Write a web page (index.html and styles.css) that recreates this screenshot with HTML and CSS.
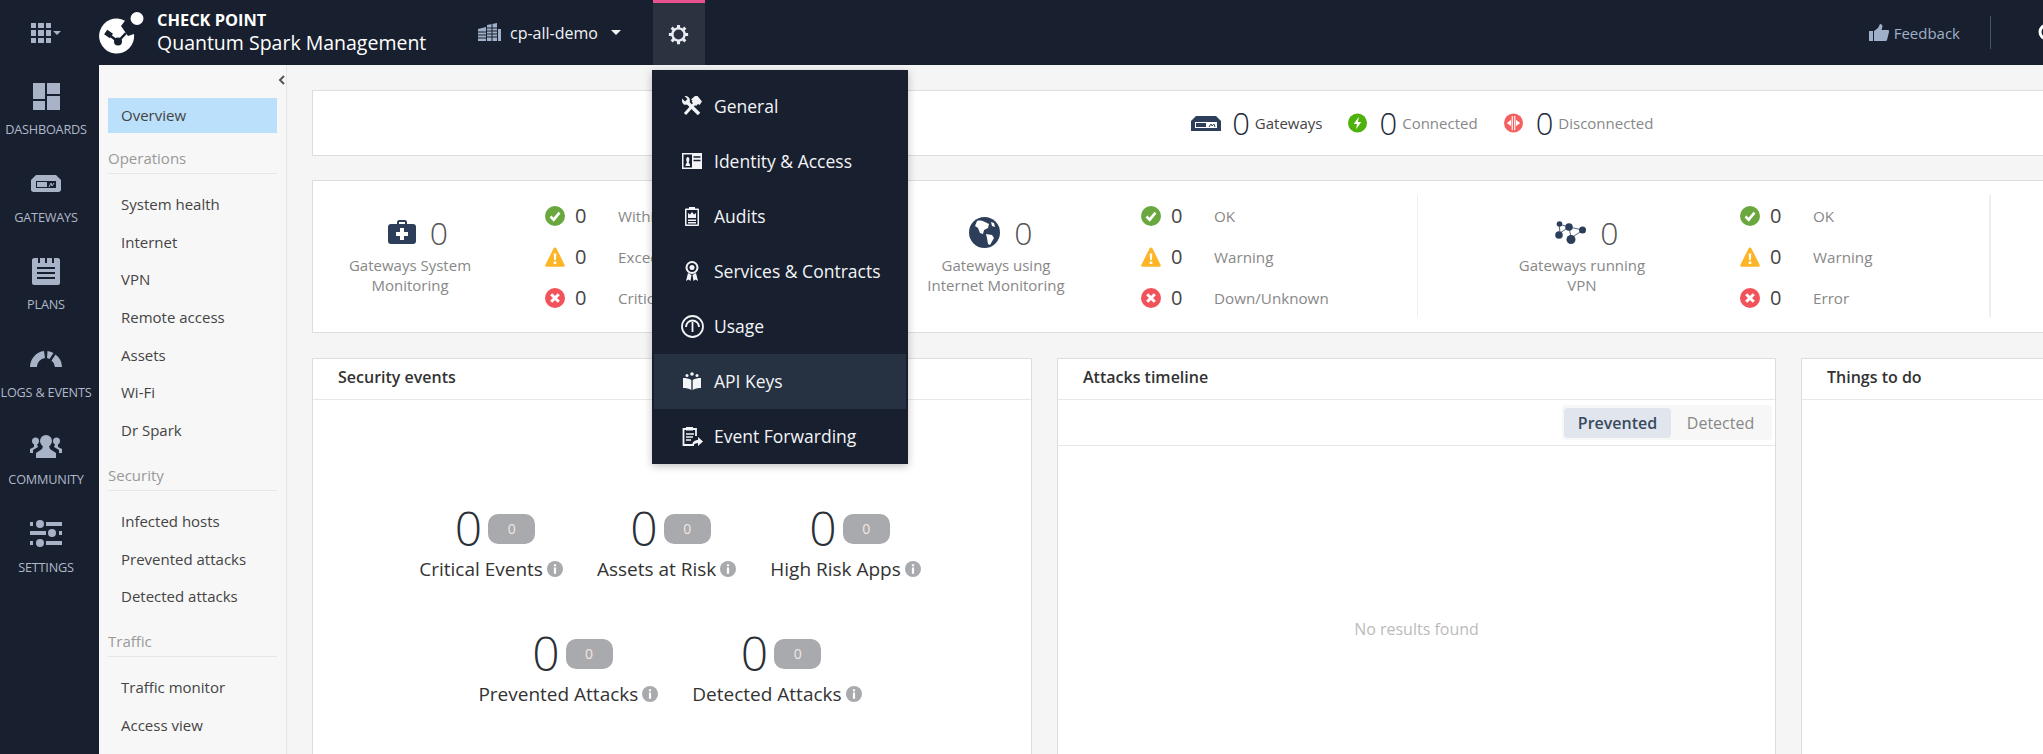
FILE: index.html
```html
<!DOCTYPE html>
<html lang="en">
<head>
    <meta charset="UTF-8">
    <title>Quantum Spark Management</title>
    <link rel="stylesheet" href="styles.css">
</head>
<body>
    <svg class="sprite" width="0" height="0">
        <symbol id="ok" viewBox="0 0 20 20"><circle cx="10" cy="10" r="10" fill="#6aa83f"/><path d="M5.5 10.5l3.2 3.2 5.8-7" fill="none" stroke="#fff" stroke-width="2.6"/></symbol>
        <symbol id="warn" viewBox="0 0 20 20"><path d="M10 .5c.7 0 1.2.4 1.5 1l8.2 16.5c.4.9-.1 1.7-1.1 1.7H1.400c-1 0-1.500-.8-1.100-1.700L8.500 1.500c.3-.6.8-1 1.500-1z" fill="#fdb528"/><path d="M8.700 6.500h2.600l-.4 6.500H9.100zM8.700 14.500h2.600V17H8.700z" fill="#fff"/></symbol>
        <symbol id="err" viewBox="0 0 20 20"><circle cx="10" cy="10" r="10" fill="#f2525a"/><path d="M6.200 6.200l7.600 7.600M13.800 6.200l-7.600 7.600" stroke="#fff" stroke-width="3"/></symbol>
        <symbol id="info" viewBox="0 0 16 16"><circle cx="8" cy="8" r="8" fill="#a9aaad"/><path d="M6.900 3.200h2.200v2H6.900zM6.900 6.500h2.200v6.300H6.900z" fill="#fff"/></symbol>
    </svg>

    <header class="topbar">
        <svg class="apps" width="31" height="20" viewBox="0 0 31 20" fill="#a8b3c7"><path d="M0 0h5v5H0zM7 0h6v5H7zM15 0h5v5h-5zM0 7h5v6H0zM7 7h6v6H7zM15 7h5v6h-5zM0 15h5v5H0zM7 15h6v5H7zM15 15h5v5h-5zM22 8h8l-4 4z"/></svg>
        <svg class="logo" width="46" height="44" viewBox="0 0 46 44">
            <path d="M26 9.700L22 15l7 10 6-2A17.500 17.500 0 1 1 26 9.700z" fill="#fff"/>
            <circle cx="38" cy="7.500" r="6.500" fill="#fff"/>
            <path d="M9 23l10 7.500 8-8.500" fill="none" stroke="#181f2e" stroke-width="2.500"/>
            <rect x="6" y="20" width="7" height="5.500" fill="#181f2e" transform="rotate(35 9 23)"/>
            <circle cx="19" cy="30.500" r="4" fill="#181f2e"/>
        </svg>
        <div class="brand">
            <div class="brand-top">CHECK POINT</div>
            <div class="brand-name">Quantum Spark Management</div>
        </div>
        <svg class="building" width="23" height="18" viewBox="0 0 23 18" fill="#9fb0c8"><path d="M0 6l8-2v14H0zM9 2l10-2v18H9zM20 6h3v12h-3z"/><path d="M0 9h8M0 12h8M0 15h8M9 5h10M9 8h10M9 11h10M9 14h10M14 0v18" stroke="#181f2e" stroke-width="1"/></svg>
        <span class="account">cp-all-demo</span>
        <span class="account-caret"></span>
        <div class="gear-tab">
            <svg width="21" height="21" viewBox="0 0 24 24" fill="none"><circle cx="12" cy="12" r="7" stroke="#e8ecf2" stroke-width="2.800"/><path d="M12 1v4M12 19v4M1 12h4M19 12h4M4.200 4.200l2.900 2.900M16.900 16.900l2.900 2.900M19.800 4.200l-2.900 2.900M7.100 16.900l-2.900 2.900" stroke="#e8ecf2" stroke-width="3.500"/></svg>
        </div>
        <div class="feedback">
            <svg width="20" height="17" viewBox="0 0 20 17" fill="#9fb0c8"><path d="M0 7h4v10H0zM5 7l4-3 2-4c1.500 0 2.500 1 2.500 2.500L12.500 6H19c1 0 1.200 1 1 2l-2 8c-.2.700-.7 1-1.500 1H5z"/></svg>
            <span>Feedback</span>
        </div>
        <div class="topbar-sep"></div>
        <svg class="search" width="24" height="24" viewBox="0 0 24 24" fill="none"><circle cx="10" cy="10" r="7" stroke="#fff" stroke-width="3"/></svg>
    </header>

    <div class="layout">
        <nav class="sidenav">
            <a class="sidenav-item">
                <span class="sidenav-icon"><svg width="27" height="27" viewBox="0 0 27 27" fill="#a8b3c7"><path d="M0 0h12v16H0zM14 0h13v11H14zM0 18h12v9H0zM14 13h13v14H14z"/></svg></span>
                DASHBOARDS
            </a>
            <a class="sidenav-item">
                <span class="sidenav-icon"><svg width="30" height="17" viewBox="0 0 30 17" fill="#a8b3c7"><path d="M5 0h20l5 5v9.500c0 1.500-1 2.500-2.500 2.500h-25C1 17 0 16 0 14.500V5z"/><rect x="5" y="6" width="20" height="7" fill="#181f2e"/><rect x="6" y="7" width="10" height="5" fill="#a8b3c7"/><path d="M18 12l2-4 1 3 2-3" stroke="#a8b3c7" fill="none"/></svg></span>
                GATEWAYS
            </a>
            <a class="sidenav-item">
                <span class="sidenav-icon"><svg width="28" height="28" viewBox="0 0 28 28" fill="#a8b3c7"><path d="M2 1h24c1 0 2 1 2 2v23c0 1-1 2-2 2H2c-1 0-2-1-2-2V3c0-1 1-2 2-2z"/><path d="M6 0h2v6H6zM13 0h2v6h-2zM20 0h2v6h-2z" fill="#181f2e"/><path d="M5 11h18M5 16h18M5 21h18" stroke="#181f2e" stroke-width="2"/></svg></span>
                PLANS
            </a>
            <a class="sidenav-item">
                <span class="sidenav-icon"><svg width="32" height="17" viewBox="0 0 32 17" fill="#a8b3c7"><path d="M0 17A16 16 0 0 1 14 1.100L15 8A9 9 0 0 0 7 17zM17.500 1.100A16 16 0 0 1 23.500 3L19.500 9A9 9 0 0 0 17 8zM25.500 4.500A16 16 0 0 1 32 17H25A9 9 0 0 0 21.500 10.500z"/></svg></span>
                LOGS &amp; EVENTS
            </a>
            <a class="sidenav-item">
                <span class="sidenav-icon"><svg width="32" height="23" viewBox="0 0 32 23" fill="#a8b3c7"><circle cx="16" cy="6" r="6"/><path d="M13 11h6l1 3 6 4v5H6v-5l6-4z"/><circle cx="5.500" cy="6" r="3.500"/><circle cx="26.500" cy="6" r="3.500"/><path d="M4 9h3l1 3-5 3v3H0v-4l4-2zM25 9h3l0 3 4 2v4h-3v-3l-5-3z"/></svg></span>
                COMMUNITY
            </a>
            <a class="sidenav-item">
                <span class="sidenav-icon"><svg width="32" height="27" viewBox="0 0 32 27" fill="#a8b3c7"><path d="M0 2h3v4H0zM16 2h16v4H16zM0 11h16v4H0zM29 11h3v4h-3zM0 21h3v4H0zM16 21h16v4H16z"/><circle cx="10" cy="4" r="4"/><circle cx="22" cy="13" r="4"/><circle cx="10" cy="23" r="4"/></svg></span>
                SETTINGS
            </a>
        </nav>

        <aside class="subnav">
            <svg class="collapse" width="7" height="10" viewBox="0 0 7 10" fill="none"><path d="M6 1L2 5l4 4" stroke="#555" stroke-width="2"/></svg>
            <a class="subnav-item subnav-item-active">Overview</a>
            <div class="subnav-head">Operations</div>
            <a class="subnav-item">System health</a>
            <a class="subnav-item">Internet</a>
            <a class="subnav-item">VPN</a>
            <a class="subnav-item">Remote access</a>
            <a class="subnav-item">Assets</a>
            <a class="subnav-item">Wi-Fi</a>
            <a class="subnav-item">Dr Spark</a>
            <div class="subnav-head">Security</div>
            <a class="subnav-item">Infected hosts</a>
            <a class="subnav-item">Prevented attacks</a>
            <a class="subnav-item">Detected attacks</a>
            <div class="subnav-head">Traffic</div>
            <a class="subnav-item">Traffic monitor</a>
            <a class="subnav-item">Access view</a>
        </aside>

        <main class="main">
            <div class="content">
                <section class="card summary">
                    <svg class="summary-gw" width="30" height="15" viewBox="0 0 30 15" fill="#2c3e5a"><path d="M5 0h20l5 5v10H0V5z"/><rect x="4" y="6" width="22" height="6" fill="#fff"/><rect x="5" y="7" width="10" height="4" fill="#2c3e5a"/><path d="M18 11l2-3 1 2 2-2 1 3" stroke="#2c3e5a" fill="none"/></svg>
                    <span class="summary-num summary-num-first">0</span>
                    <span class="summary-label summary-label-dark">Gateways</span>
                    <svg class="summary-icon" width="19" height="20" viewBox="0 0 20 20"><circle cx="10" cy="10" r="10" fill="#4fb10c"/><path d="M11.500 3.500L6 11h3.500l-1 5.500L14 9h-3.500z" fill="#fff"/></svg>
                    <span class="summary-num">0</span>
                    <span class="summary-label">Connected</span>
                    <svg class="summary-icon summary-icon-last" width="19" height="20" viewBox="0 0 20 20"><circle cx="10" cy="10" r="10" fill="#f5605f"/><path d="M8.700 2.500v15M11.300 2.500v15" stroke="#fff" stroke-width="1.200"/><path d="M7.500 6.500L3 10l4.500 3.500zM12.500 6.500L17 10l-4.500 3.500z" fill="#fff"/></svg>
                    <span class="summary-num">0</span>
                    <span class="summary-label">Disconnected</span>
                </section>

                <section class="card health">
                    <div class="health-seg health-seg-1">
                        <div class="health-head">
                            <div class="health-top">
                                <svg width="28" height="24" viewBox="0 0 28 24" fill="#2c3e5a"><path d="M9 4V2c0-1 1-2 2-2h6c1 0 2 1 2 2v2h6c2 0 3 1 3 3v14c0 2-1 3-3 3H3c-2 0-3-1-3-3V7c0-2 1-3 3-3zm2 0h6V2h-6z"/><path d="M12 8h4v4h4v4h-4v4h-4v-4H8v-4h4z" fill="#fff"/></svg>
                                <span class="health-num">0</span>
                            </div>
                            <div class="health-label">Gateways System<br>Monitoring</div>
                        </div>
                        <div class="status-list">
                            <div class="status-row"><svg class="status-icon"><use href="#ok"/></svg><span class="status-num">0</span><span class="status-text">Within limits</span></div>
                            <div class="status-row"><svg class="status-icon"><use href="#warn"/></svg><span class="status-num">0</span><span class="status-text">Exceeded</span></div>
                            <div class="status-row"><svg class="status-icon"><use href="#err"/></svg><span class="status-num">0</span><span class="status-text">Critical</span></div>
                        </div>
                    </div>
                    <div class="health-seg health-seg-2">
                        <div class="health-head">
                            <div class="health-top">
                                <svg width="31" height="31" viewBox="0 0 31 31"><circle cx="15.500" cy="15.500" r="15.500" fill="#2c3e5a"/><path d="M8 4c3-1 6 0 8 1l4 2-1 4-4 2-1 4-3-1-2-5-3-2zM17 17l6 1 2 3-4 7-2-1-1-6zM22 5l3 1 1 4-3-1z" fill="#fff"/></svg>
                                <span class="health-num">0</span>
                            </div>
                            <div class="health-label">Gateways using<br>Internet Monitoring</div>
                        </div>
                        <div class="status-list">
                            <div class="status-row"><svg class="status-icon"><use href="#ok"/></svg><span class="status-num">0</span><span class="status-text">OK</span></div>
                            <div class="status-row"><svg class="status-icon"><use href="#warn"/></svg><span class="status-num">0</span><span class="status-text">Warning</span></div>
                            <div class="status-row"><svg class="status-icon"><use href="#err"/></svg><span class="status-num">0</span><span class="status-text">Down/Unknown</span></div>
                        </div>
                    </div>
                    <div class="health-seg health-seg-3">
                        <div class="health-head">
                            <div class="health-top">
                                <svg width="31" height="23" viewBox="0 0 31 23" fill="#2c3e5a"><path d="M4 3l1 9M4 3l10 3M14 6l14 3M14 6l2 11M28 9l-12 8M5 12l9-6" stroke="#2c3e5a" stroke-width=".8"/><circle cx="4.500" cy="3" r="2.800"/><circle cx="14" cy="6" r="3.800"/><circle cx="27.500" cy="9" r="3.500"/><circle cx="4" cy="14" r="3.800"/><circle cx="16" cy="18.500" r="4.500"/></svg>
                                <span class="health-num">0</span>
                            </div>
                            <div class="health-label">Gateways running<br>VPN</div>
                        </div>
                        <div class="status-list">
                            <div class="status-row"><svg class="status-icon"><use href="#ok"/></svg><span class="status-num">0</span><span class="status-text">OK</span></div>
                            <div class="status-row"><svg class="status-icon"><use href="#warn"/></svg><span class="status-num">0</span><span class="status-text">Warning</span></div>
                            <div class="status-row"><svg class="status-icon"><use href="#err"/></svg><span class="status-num">0</span><span class="status-text">Error</span></div>
                        </div>
                    </div>
                    <div class="health-seg"></div>
                </section>

                <div class="panels">
                    <section class="card panel">
                        <h2 class="panel-title">Security events</h2>
                        <div class="kpi-body">
                            <div class="kpi-row">
                                <div class="kpi"><div class="kpi-top"><span class="kpi-num">0</span><span class="kpi-badge">0</span></div><div class="kpi-label">Critical Events<svg class="info"><use href="#info"/></svg></div></div>
                                <div class="kpi"><div class="kpi-top"><span class="kpi-num">0</span><span class="kpi-badge">0</span></div><div class="kpi-label">Assets at Risk<svg class="info"><use href="#info"/></svg></div></div>
                                <div class="kpi"><div class="kpi-top"><span class="kpi-num">0</span><span class="kpi-badge">0</span></div><div class="kpi-label">High Risk Apps<svg class="info"><use href="#info"/></svg></div></div>
                            </div>
                            <div class="kpi-row">
                                <div class="kpi"><div class="kpi-top"><span class="kpi-num">0</span><span class="kpi-badge">0</span></div><div class="kpi-label">Prevented Attacks<svg class="info"><use href="#info"/></svg></div></div>
                                <div class="kpi"><div class="kpi-top"><span class="kpi-num">0</span><span class="kpi-badge">0</span></div><div class="kpi-label">Detected Attacks<svg class="info"><use href="#info"/></svg></div></div>
                            </div>
                        </div>
                    </section>
                    <section class="card panel">
                        <h2 class="panel-title">Attacks timeline</h2>
                        <div class="panel-tools">
                            <div class="toggle">
                                <span class="toggle-btn toggle-btn-on">Prevented</span>
                                <span class="toggle-btn">Detected</span>
                            </div>
                        </div>
                        <div class="empty">No results found</div>
                    </section>
                    <section class="card panel panel-wide">
                        <h2 class="panel-title">Things to do</h2>
                    </section>
                </div>
            </div>
        </main>
    </div>

    <!-- Settings dropdown -->
    <div class="menu">
        <a class="menu-item">
            <span class="menu-icon"><svg width="20" height="20" viewBox="0 0 20 20" fill="#f2f4f7"><path d="M5.500 6.500L17 18" stroke="#f2f4f7" stroke-width="3.500"/><path d="M0 2.500L3 5.500 5.500 3 2.500 0C5-.5 8 1.500 8 4.500 8 7.500 5 9.500 2 8.500 .5 7.500-.5 5 0 2.500z"/><path d="M3 18L13 7" stroke="#f2f4f7" stroke-width="3"/><path d="M9 3.500L13 0h2.500L20 5.500 17.500 9 16 8l-2 2-4.500-4.500 1-1z"/></svg></span>
            General
        </a>
        <a class="menu-item">
            <span class="menu-icon"><svg width="20" height="16" viewBox="0 0 20 16"><rect width="20" height="16" fill="#f2f4f7"/><rect x="1.500" y="1.500" width="8.500" height="13" fill="#181f2e"/><path d="M3.500 13c0-2 1-3 1.500-3.500-.5-1-.8-2-.8-3 0-1.500.7-2.500 1.600-2.500s1.600 1 1.600 2.500c0 1-.3 2-.8 3 .5.500 1.500 1.500 1.500 3.500z" fill="#f2f4f7"/><path d="M11.500 4h7M11.500 7.500h7" stroke="#181f2e" stroke-width="1.500"/></svg></span>
            Identity &amp; Access
        </a>
        <a class="menu-item">
            <span class="menu-icon"><svg width="14" height="19" viewBox="0 0 14 19" fill="#f2f4f7"><path d="M4 0h6v1.500h3c.5 0 1 .5 1 1v15.500c0 .5-.5 1-1 1H1c-.5 0-1-.5-1-1V2.500c0-.5.5-1 1-1h3z"/><rect x="1.500" y="3" width="11" height="14.500" fill="#181f2e"/><path d="M3 6l2 1.500L7 5l2 2.500L11 6v5H3zM3 12.500h8V14H3zM3 15h8v1.500H3z"/></svg></span>
            Audits
        </a>
        <a class="menu-item">
            <span class="menu-icon"><svg width="14" height="21" viewBox="0 0 14 21" fill="none"><circle cx="7" cy="6.500" r="5.500" stroke="#f2f4f7" stroke-width="2"/><circle cx="7" cy="6.500" r="2.500" fill="#f2f4f7"/><path d="M3 12l-2 8 2.500-1.500L5.500 20l1-6M11 12l2 8-2.500-1.500L8.500 20l-1-6" fill="#f2f4f7"/></svg></span>
            Services &amp; Contracts
        </a>
        <a class="menu-item">
            <span class="menu-icon"><svg width="23" height="23" viewBox="0 0 23 23" fill="none"><circle cx="11.500" cy="11.500" r="10.500" stroke="#f2f4f7" stroke-width="1.800"/><path d="M5 12a6.500 6.500 0 0 1 13 0" stroke="#f2f4f7" stroke-width="2"/><path d="M11.500 7v10" stroke="#f2f4f7" stroke-width="1.800"/></svg></span>
            Usage
        </a>
        <a class="menu-item menu-item-active">
            <span class="menu-icon"><svg width="18" height="18" viewBox="0 0 18 18" fill="#f2f4f7"><path d="M0 6c3 0 6 .5 8.300 2v10C6 16.500 3 16 0 16zM18 6c-3 0-6 .5-8.300 2v10c2.300-1.500 5.300-2 8.300-2z"/><circle cx="9" cy="2" r="1.800"/><circle cx="4" cy="3.500" r="1.500"/><circle cx="14" cy="3.500" r="1.500"/></svg></span>
            API Keys
        </a>
        <a class="menu-item">
            <span class="menu-icon"><svg width="21" height="19" viewBox="0 0 21 19" fill="none"><path d="M5 2H1.500v16H12" stroke="#f2f4f7" stroke-width="1.800"/><path d="M11 2h3v7" stroke="#f2f4f7" stroke-width="1.800"/><rect x="4" y="0" width="7" height="3.500" fill="#f2f4f7"/><path d="M4 7h8M4 10h7M4 13h5" stroke="#f2f4f7" stroke-width="1.500"/><path d="M10 19c0-4 3-6 6-6v-3l5 4.500-5 4.500v-3c-2 0-4 1-6 3z" fill="#f2f4f7"/></svg></span>
            Event Forwarding
        </a>
    </div>
</body>
</html>
```

FILE: styles.css
```css
body {
    margin: 0;
    height: 754px;
    overflow: hidden;
    font-family: "Open Sans", sans-serif;
    background-color: #f5f5f5;
    color: #333;
}

.sprite {
    position: absolute;
}

/* Top bar */
.topbar {
    height: 65px;
    display: flex;
    align-items: center;
    background-color: #181f2e;
    color: #fff;
}

.apps {
    margin-left: 31px;
    margin-right: 37px;
    flex-shrink: 0;
}

.logo {
    margin-right: 12px;
    flex-shrink: 0;
}

.brand {
    width: 321px;
    flex-shrink: 0;
}

.brand-top {
    font-size: 16.4px;
    font-weight: 700;
    line-height: 20px;
}

.brand-name {
    font-size: 19.5px;
    line-height: 26px;
}

.building {
    flex-shrink: 0;
    margin-top: -1px;
}

.account {
    margin-left: 9px;
    font-size: 16px;
    color: #f0f2f5;
}

.account-caret {
    margin-left: 13px;
    border-left: 5px solid transparent;
    border-right: 5px solid transparent;
    border-top: 5px solid #f0f2f5;
}

.gear-tab {
    margin-left: 32px;
    width: 52px;
    height: 62px;
    align-self: flex-start;
    display: flex;
    align-items: center;
    justify-content: center;
    border-top: 3px solid #e8528f;
    background-color: #2b3240;
}

.feedback {
    margin-left: auto;
    display: flex;
    align-items: center;
    gap: 5px;
    font-size: 15px;
    color: #9fb0c8;
}

.topbar-sep {
    width: 1px;
    height: 33px;
    margin-left: 30px;
    margin-right: 46px;
    background-color: #4a5468;
}

.search {
    flex-shrink: 0;
    margin-right: -18px;
    margin-top: 2px;
}

/* Page columns */
.layout {
    display: flex;
    height: 689px;
}

.sidenav {
    width: 99px;
    flex-shrink: 0;
    padding-right: 7px;
    box-sizing: border-box;
    background-color: #181f2e;
}

.sidenav-item {
    display: block;
    height: 87.6px;
    padding-top: 14px;
    box-sizing: border-box;
    text-align: center;
    font-size: 12.7px;
    line-height: 18px;
    letter-spacing: -0.2px;
    white-space: nowrap;
    color: #b0b9ca;
}

.sidenav-icon {
    display: flex;
    height: 34px;
    margin-bottom: 7px;
    align-items: center;
    justify-content: center;
}

.subnav {
    position: relative;
    width: 188px;
    flex-shrink: 0;
    padding: 33px 9px 0;
    box-sizing: border-box;
    background-color: #f7f7f7;
    border-right: 1px solid #e4e4e4;
}

.collapse {
    position: absolute;
    top: 10px;
    right: 1px;
}

.subnav-item {
    display: block;
    height: 37.7px;
    padding-left: 13px;
    font-size: 15px;
    line-height: 37.7px;
    color: #444;
}

.subnav-item-active {
    height: 35px;
    margin-bottom: 3.3px;
    line-height: 35px;
    background-color: #bbe0fb;
}

.subnav-head {
    margin-top: 10px;
    margin-bottom: 12px;
    height: 30px;
    line-height: 30px;
    font-size: 15px;
    color: #999;
    border-bottom: 1px solid #e6e6e6;
}

.main {
    flex: 1;
    min-width: 0;
    overflow: hidden;
    padding: 25px 0 0 25px;
}

.content {
    width: 2220px;
}

.card {
    background-color: #fff;
    border: 1px solid #ddd;
    box-sizing: border-box;
}

/* Totals strip */
.summary {
    height: 66px;
    display: flex;
    align-items: center;
    justify-content: center;
}

.summary-num {
    margin: 0 5px 0 13px;
    font-size: 31px;
    font-weight: 300;
    line-height: 40px;
    color: #1e2a3a;
}

.summary-num-first {
    margin-left: 11.5px;
}

.summary-label {
    font-size: 15px;
    color: #888;
}

.summary-label-dark {
    color: #444;
}

.summary-gw {
    flex-shrink: 0;
}

.summary-icon {
    margin-left: 25px;
}

.summary-icon-last {
    margin-left: 26px;
}

/* Health strip */
.health {
    height: 153px;
    margin-top: 24px;
    padding-top: 14px;
    display: flex;
}

.health-seg {
    height: 122px;
    display: flex;
    flex-shrink: 0;
    border-right: 1px solid #eee;
}

.health-seg-1 {
    width: 519px;
}

.health-seg-2 {
    width: 585px;
    padding-left: 63px;
    box-sizing: border-box;
}

.health-seg-3 {
    width: 572px;
    padding-left: 64px;
    box-sizing: border-box;
}

.health-head {
    width: 194px;
    flex-shrink: 0;
    text-align: center;
}

.health-seg-2 .health-head,
.health-seg-3 .health-head {
    width: 200px;
}

.health-top {
    height: 40px;
    margin-top: 17px;
    padding-left: 16px;
    display: flex;
    align-items: center;
    justify-content: center;
    gap: 14px;
}

.health-seg-2 .health-top,
.health-seg-3 .health-top {
    padding-left: 10px;
}

.health-num {
    font-size: 32px;
    font-weight: 300;
    color: #555;
}

.health-label {
    margin-top: 3px;
    font-size: 15px;
    line-height: 20px;
    color: #888;
}

.status-list {
    margin-left: 38px;
}

.health-seg-2 .status-list {
    margin-left: 45px;
}

.health-seg-3 .status-list {
    margin-left: 58px;
}

.status-row {
    height: 41px;
    display: flex;
    align-items: center;
}

.status-icon {
    width: 20px;
    height: 20px;
    flex-shrink: 0;
}

.status-num {
    width: 53px;
    padding-left: 10px;
    box-sizing: border-box;
    font-size: 20px;
    color: #444;
}

.status-text {
    font-size: 15.2px;
    color: #888;
}

/* Panels */
.panels {
    display: flex;
    gap: 25px;
    margin-top: 25px;
}

.panel {
    width: 720px;
    height: 500px;
    flex-shrink: 0;
}

.panel:nth-child(2) {
    width: 719px;
}

.panel-wide {
    width: 731px;
}

.panel-title {
    margin: 0;
    height: 40px;
    padding-left: 25px;
    font-size: 16px;
    font-weight: 600;
    line-height: 36px;
    color: #333;
    border-bottom: 1px solid #e8e8e8;
}

.kpi-body {
    padding-top: 104px;
}

.kpi-row {
    display: flex;
    justify-content: center;
    gap: 34px;
    margin-bottom: 48px;
    padding-right: 4px;
}

.kpi {
    text-align: center;
}

.kpi-top {
    display: flex;
    align-items: center;
    justify-content: center;
    gap: 6px;
    height: 48px;
    padding-left: 8px;
}

.kpi-num {
    font-size: 48px;
    font-weight: 300;
    line-height: 48px;
    color: #2b2f36;
}

.kpi-badge {
    width: 47px;
    height: 30px;
    margin-top: 2px;
    border-radius: 10px;
    background-color: #a9aaad;
    font-size: 14px;
    line-height: 30px;
    color: #f3e7e3;
}

.kpi-label {
    margin-top: 5px;
    display: flex;
    align-items: center;
    gap: 4px;
    font-size: 19px;
    line-height: 24px;
    white-space: nowrap;
    color: #333;
}

.info {
    width: 16px;
    height: 16px;
    flex-shrink: 0;
}

.panel-tools {
    height: 46px;
    padding-top: 5px;
    box-sizing: border-box;
    display: flex;
    justify-content: flex-end;
    padding-right: 3px;
    border-bottom: 1px solid #e8e8e8;
}

.toggle {
    display: flex;
    height: 35px;
    padding: 3px 2px 2px;
    box-sizing: border-box;
    border-radius: 4px;
    background-color: #f7f7f7;
}

.toggle-btn {
    width: 99px;
    text-align: center;
    font-size: 16px;
    line-height: 30px;
    color: #888;
}

.toggle-btn-on {
    width: 107px;
    border-radius: 4px;
    background-color: #e1e6ee;
    font-weight: 600;
    color: #3a4a5f;
}

.empty {
    padding-top: 172px;
    text-align: center;
    font-size: 16px;
    line-height: 22px;
    color: #bbb;
}

/* Settings dropdown */
.menu {
    position: absolute;
    top: 70px;
    left: 652px;
    width: 256px;
    padding: 9px 2px 0;
    box-sizing: border-box;
    background-color: #181f2e;
    box-shadow: 0 2px 8px rgba(0, 0, 0, 0.25);
}

.menu-item {
    height: 55px;
    padding-bottom: 1px;
    box-sizing: border-box;
    display: flex;
    align-items: center;
    font-size: 17.5px;
    color: #f2f4f7;
}

.menu-item-active {
    background-color: #263242;
}

.menu-icon {
    width: 60px;
    flex-shrink: 0;
    padding-left: 16px;
    box-sizing: border-box;
    display: flex;
    justify-content: center;
}
```
